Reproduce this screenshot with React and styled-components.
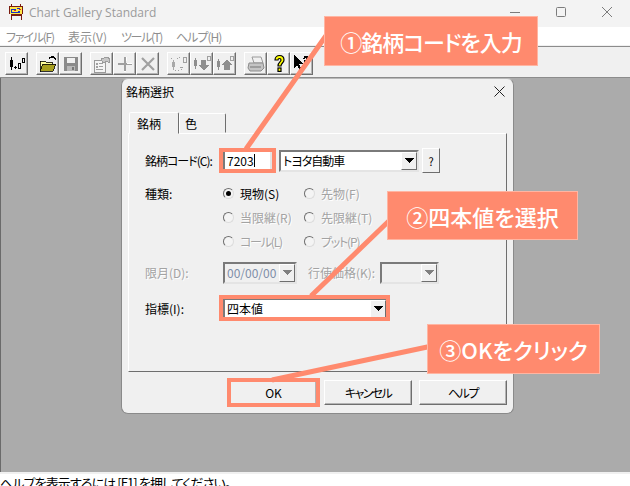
import styled, { createGlobalStyle } from "styled-components";

const JP = `"Noto Sans CJK JP", "Liberation Sans", sans-serif`;

const GlobalStyle = createGlobalStyle`
  html, body {
    margin: 0;
    padding: 0;
    background: #f0f0f0;
    overflow: hidden;
  }
  * {
    box-sizing: border-box;
  }
`;

const CandleIcon = () => (
  <svg width="18" height="18" viewBox="0 0 18 18" shapeRendering="crispEdges">
    <path d="M3 2h1v3h1v7H4v3H3v-3H2V5h1z" fill="#000" />
    <path d="M7 11h1v1h1v1H8v1H7v-1H6v-1h1zM10 8h3v6h-3zM11 9v4h1V9zM14 3h3v5h-3zM15 4v3h1V4z" fill="#000" fillRule="evenodd" />
  </svg>
);

const OpenIcon = () => (
  <svg width="18" height="18" viewBox="0 0 18 18" shapeRendering="crispEdges">
    <path d="M1 6h5l1 1h6v2H5l-3 7H1z" fill="#ffff9c" stroke="#000" strokeWidth="0.8" />
    <path d="M4 9h13l-3 7H1z" fill="#a8a020" stroke="#000" strokeWidth="0.8" />
    <path d="M10 4c1-2 3-3 5-2M15 2l2 3M15 2l-3 1" fill="none" stroke="#000" strokeWidth="1" />
  </svg>
);

const SaveIcon = () => (
  <svg width="18" height="18" viewBox="0 0 18 18" shapeRendering="crispEdges">
    <path d="M2 2h14v14H2z" fill="#8a8a8a" />
    <path d="M5 3h8v5H5z" fill="#f0f0f0" />
    <path d="M5 11h8v5H5z" fill="#b8b8b8" />
    <path d="M10 12h2v3h-2z" fill="#777" />
  </svg>
);

const FormIcon = () => (
  <svg width="20" height="18" viewBox="0 0 20 18" shapeRendering="crispEdges">
    <path d="M2 5h11v12H2z" fill="#f4f4f4" stroke="#9a9a9a" />
    <path d="M4 8h2v2H4zM7 8h4v1H7zM4 11h2v2H4zM7 11h4v1H7zM4 14h7v1H4z" fill="#a0a0a0" />
    <path d="M9 4l6-2 3 2-1 4-2-2-4 2z" fill="#c6c6c6" stroke="#9a9a9a" />
  </svg>
);

const PlusIcon = () => (
  <svg width="18" height="18" viewBox="0 0 18 18" shapeRendering="crispEdges">
    <path d="M8 2h2v6h6v2h-6v6H8v-6H2V8h6z" fill="#a0a0a0" />
    <path d="M10 2h1v6h5v1h-5M8 16h2v1H8z" fill="#fff" />
  </svg>
);

const CrossIcon = () => (
  <svg width="18" height="18" viewBox="0 0 18 18">
    <path d="M3 3l12 12M15 3L3 15" stroke="#a0a0a0" strokeWidth="2.2" fill="none" />
  </svg>
);

const CycleIcon = () => (
  <svg width="20" height="18" viewBox="0 0 20 18" shapeRendering="crispEdges">
    <path d="M3 7h1V5h1v2h1v5H5v3H4v-3H3z" fill="#a8a8a8" />
    <path d="M14 2h4v6h-4zM15 3v4h2V3z" fill="#a0a0a0" fillRule="evenodd" />
    <path d="M8 3h1v1H8zM10 2h1v1h-1zM2 3h1v1H2zM6 15h1v1H6zM9 15h1v1H9zM12 14h1v1h-1zM11 12h3v1h-3z" fill="#a0a0a0" />
  </svg>
);

const DownIcon = () => (
  <svg width="20" height="18" viewBox="0 0 20 18" shapeRendering="crispEdges">
    <path d="M2 5h1V3h1v2h1v6H4v3H3v-3H2z" fill="#8e8e8e" />
    <path d="M9 5h5v5h3l-5 6-5-6h2z" fill="#8e8e8e" />
    <path d="M15 1h4v5h-4zM16 2v3h2V2z" fill="#a0a0a0" fillRule="evenodd" />
  </svg>
);

const UpIcon = () => (
  <svg width="20" height="18" viewBox="0 0 20 18" shapeRendering="crispEdges">
    <path d="M2 6h1V4h1v2h1v6H4v3H3v-3H2z" fill="#8e8e8e" />
    <path d="M9 15v-5H7l5-6 5 6h-2v5z" fill="#8e8e8e" />
    <path d="M15 1h4v5h-4zM16 2v3h2V2z" fill="#a0a0a0" fillRule="evenodd" />
  </svg>
);

const PrintIcon = () => (
  <svg width="20" height="18" viewBox="0 0 20 18">
    <path d="M6 2h9l2 6H8z" fill="#f0f0f0" stroke="#9a9a9a" />
    <path d="M3 8h14l1 5-3 3H4l-2-3z" fill="#c4c4c4" stroke="#8c8c8c" />
    <path d="M4 12h11" stroke="#777" />
  </svg>
);

const HelpIcon = () => (
  <svg width="18" height="20" viewBox="0 0 18 20">
    <path d="M5 6c0-6 9-6 9 0 0 3-3 3-3 6H8c0-4 3-4 3-6 0-2-3-2-3 0z" fill="#ffff00" stroke="#000" strokeWidth="1.2" />
    <rect x="8" y="14" width="3" height="3.4" fill="#ffff00" stroke="#000" strokeWidth="1.2" />
  </svg>
);

const PointerHelpIcon = () => (
  <svg width="20" height="20" viewBox="0 0 20 20" shapeRendering="crispEdges">
    <path d="M2 1l9 9H7l3 6-2 1-3-6-3 3z" fill="#000" />
    <path d="M11 4h1V2h4v1h1v3h-1v1h-2v2h-2V6h2V4h-1v1h-2z" fill="#000" />
  </svg>
);

const AppIcon = () => (
  <svg width="16" height="16" viewBox="0 0 16 16" shapeRendering="crispEdges">
    <path d="M3 0h1v2h8V0h1v2h2v8h-1v6h-1v-4H4v4H3V10H1V2h2z" fill="#7a1c10" />
    <path d="M2 3h12v7H2z" fill="#ffe84a" />
    <path d="M3 5h5v1H4v2h6V7h2v2H3zM9 4h3v1H9z" fill="#1830c8" />
    <path d="M6 6h2v1H6zM11 5h2v1h-2z" fill="#e02020" />
  </svg>
);

const ArrowDown = ({ $disabled }) => (
  <svg width="9" height="5" viewBox="0 0 9 5" shapeRendering="crispEdges">
    <path d="M0 0h9L4.500 5z" fill={$disabled ? "#808080" : "#000"} />
  </svg>
);

const Page = styled.div`
  position: relative;
  width: 630px;
  height: 486px;
  display: flex;
  flex-direction: column;
  overflow: hidden;
  font-family: ${JP};
  font-size: 12px;
  font-feature-settings: "palt";
  color: #000;
`;

const TitleBar = styled.div`
  height: 27px;
  flex: none;
  display: flex;
  align-items: center;
  background: #f3f3f3;
  padding-left: 8px;
  padding-bottom: 3px;
`;

const TitleText = styled.span`
  margin-left: 5px;
  font-family: "Open Sans", "Liberation Sans", sans-serif;
  font-size: 12px;
  color: #9b9b9b;
`;

const WindowControls = styled.div`
  margin-left: auto;
  display: flex;
  align-items: center;
  color: #7c7c7c;
`;

const ControlSlot = styled.div`
  width: 46px;
  height: 24px;
  display: flex;
  align-items: center;
  justify-content: center;
`;

const MenuBar = styled.div`
  height: 19px;
  flex: none;
  display: flex;
  align-items: center;
  background: #fff;
  padding-left: 6px;
  border-bottom: 1px solid #f0f0f0;
`;

const MenuItem = styled.span`
  width: ${(p) => p.$width}px;
  font-size: 12px;
  color: #8f8f8f;
  white-space: nowrap;
  letter-spacing: ${(p) => p.$ls || 0}px;
`;

const Toolbar = styled.div`
  height: 32px;
  flex: none;
  display: flex;
  align-items: flex-start;
  padding: 5px 0 0 5px;
  gap: 8px;
  background: #f0f0f0;
  border-top: 1px solid #8c8c8c;
  border-bottom: 1px solid #8c8c8c;
`;

const ToolGroup = styled.div`
  display: flex;
`;

const ToolButton = styled.div`
  width: 23px;
  height: 23px;
  display: flex;
  align-items: center;
  justify-content: center;
  background: #f0f0f0;
  border: 1px solid;
  border-color: #fff #6e6e6e #6e6e6e #fff;
  box-shadow: inset -1px -1px 0 #b4b4b4;
`;

const Workspace = styled.div`
  flex: 1;
  display: flex;
  align-items: flex-start;
  padding-left: 120px;
  background: #ababab;
  border-left: 1px solid #6a6a6a;
`;

const StatusBar = styled.div`
  height: 14px;
  flex: none;
  background: #fff;
  border-top: 2px solid #f0f0f0;
  font-size: 13px;
  line-height: 17px;
  white-space: nowrap;
  overflow: hidden;
  letter-spacing: -0.9px;
`;

const Dialog = styled.div`
  width: 393px;
  height: 336px;
  display: flex;
  flex-direction: column;
  background: #f0f0f0;
  border: 1px solid #8a8a8a;
  border-top-color: #b8b8b8;
  border-radius: 7px;
  padding: 0 6px;
`;

const DialogHeader = styled.div`
  height: 24px;
  flex: none;
  display: flex;
  align-items: center;
  justify-content: space-between;
  padding-right: 2px;
  margin: 0 0 9px -2px;
  font-size: 12px;
`;

const Tabs = styled.div`
  height: 21px;
  flex: none;
  display: flex;
  align-items: flex-end;
  padding-left: 1px;
`;

const Tab = styled.div`
  width: ${(p) => p.$width}px;
  height: ${(p) => (p.$active ? 22 : 20)}px;
  padding-left: ${(p) => (p.$active ? 7 : 5)}px;
  display: flex;
  align-items: center;
  font-size: 12px;
  background: #f0f0f0;
  border: 1px solid;
  border-color: #fff #6e6e6e transparent #fff;
  border-radius: 2px 2px 0 0;
  position: relative;
  margin-bottom: ${(p) => (p.$active ? -1 : 0)}px;
  z-index: ${(p) => (p.$active ? 1 : 0)};
`;

const Panel = styled.div`
  height: 239px;
  flex: none;
  display: flex;
  flex-direction: column;
  padding: 15px 0 0 16px;
  border: 1px solid;
  border-color: #fff #6e6e6e #6e6e6e #fff;
`;

const Row = styled.div`
  display: flex;
  align-items: center;
  height: ${(p) => p.$h || 23}px;
  margin-top: ${(p) => p.$top || 0}px;
`;

const FieldLabel = styled.span`
  width: ${(p) => p.$width || 78}px;
  margin-left: ${(p) => p.$left || 0}px;
  flex: none;
  font-size: 12px;
  white-space: nowrap;
  letter-spacing: ${(p) => p.$ls || 0}px;
  color: ${(p) => (p.$disabled ? "#a3a3a3" : "#000")};
  text-shadow: ${(p) => (p.$disabled ? "1px 1px 0 #fff" : "none")};
`;

const TextField = styled.div`
  width: ${(p) => p.$width}px;
  height: 22px;
  flex: none;
  display: flex;
  align-items: center;
  padding-left: 2px;
  background: #fff;
  border: 2px solid;
  border-color: #7a7a7a #e4e4e4 #e4e4e4 #7a7a7a;
  font-size: 12px;
  white-space: nowrap;
`;

const Caret = styled.span`
  width: 1px;
  height: 13px;
  background: #000;
`;

const Combo = styled(TextField)`
  position: relative;
  padding-right: 17px;
  margin-left: ${(p) => p.$left || 0}px;
  letter-spacing: ${(p) => p.$ls || 0}px;
  background: ${(p) => (p.$disabled ? "#f0f0f0" : "#fff")};
  color: ${(p) => (p.$disabled ? "#7f8ea8" : "#000")};
`;

const ComboButton = styled.div`
  position: absolute;
  top: 0;
  right: 0;
  bottom: 0;
  width: 16px;
  display: flex;
  align-items: center;
  justify-content: center;
  background: #f0f0f0;
  border: 1px solid;
  border-color: #fff #6e6e6e #6e6e6e #fff;
`;

const SmallButton = styled.div`
  width: 18px;
  height: 25px;
  margin-left: 3px;
  flex: none;
  display: flex;
  align-items: center;
  justify-content: center;
  font-size: 11px;
  background: #f0f0f0;
  border: 1px solid;
  border-color: #fff #6e6e6e #6e6e6e #fff;
`;

const RadioGroup = styled.div`
  width: 81px;
  flex: none;
  display: flex;
  align-items: center;
  gap: 6px;
  font-size: 12px;
  white-space: nowrap;
  letter-spacing: ${(p) => p.$ls || 0}px;
  color: ${(p) => (p.$disabled ? "#a3a3a3" : "#000")};
  text-shadow: ${(p) => (p.$disabled ? "1px 1px 0 #fff" : "none")};
`;

const RadioDot = styled.span`
  width: 11px;
  height: 11px;
  flex: none;
  border-radius: 50%;
  background: #f4f4f4;
  border: 1px solid;
  border-color: #6e6e6e #dcdcdc #dcdcdc #6e6e6e;
  display: flex;
  align-items: center;
  justify-content: center;
  &::after {
    content: "";
    width: 5px;
    height: 5px;
    border-radius: 50%;
    background: ${(p) => (p.$checked ? "#000" : "transparent")};
  }
`;

const RadioIndent = styled.div`
  width: 78px;
  flex: none;
`;

const ButtonRow = styled.div`
  display: flex;
  justify-content: flex-end;
  gap: 7px;
  margin-top: 8px;
`;

const DialogButton = styled.div`
  width: ${(p) => p.$width}px;
  height: 25px;
  display: flex;
  align-items: center;
  justify-content: center;
  font-size: 12px;
  letter-spacing: ${(p) => p.$ls || 0}px;
  background: #f0f0f0;
  border: 1px solid;
  border-color: #fff #6e6e6e #6e6e6e #fff;
  box-shadow: inset -1px -1px 0 #b4b4b4;
`;

const Leaders = styled.svg`
  position: absolute;
  inset: 0;
  pointer-events: none;
`;

const Callout = styled.div`
  position: absolute;
  left: ${(p) => p.$x}px;
  top: ${(p) => p.$y}px;
  width: ${(p) => p.$w}px;
  height: ${(p) => p.$h}px;
  display: flex;
  align-items: center;
  justify-content: center;
  background: #ff8a6e;
  color: #fff;
  font-size: 22px;
  font-weight: 500;
  white-space: nowrap;
  letter-spacing: ${(p) => p.$ls || 0}px;
  outline: 1px solid #ffb5a2;
  outline-offset: -1px;
`;

const Highlight = styled.div`
  position: absolute;
  left: ${(p) => p.$x}px;
  top: ${(p) => p.$y}px;
  width: ${(p) => p.$w}px;
  height: ${(p) => p.$h}px;
  border: 4px solid #ff8a6e;
  pointer-events: none;
`;

const radioRows = [
  [
    { label: "現物(S)", checked: true },
    { label: "先物(F)", disabled: true },
  ],
  [
    { label: "当限継(R)", disabled: true },
    { label: "先限継(T)", disabled: true },
  ],
  [
    { label: "コール(L)", disabled: true, ls: -1.2 },
    { label: "プット(P)", disabled: true, ls: -1.2 },
  ],
];

const App = () => {
  return (
    <>
      <GlobalStyle />
      <Page>
        <TitleBar>
          <AppIcon />
          <TitleText>Chart Gallery Standard</TitleText>
          <WindowControls>
            <ControlSlot>
              <svg width="10" height="10" viewBox="0 0 10 10" shapeRendering="crispEdges">
                <path d="M0 5h10" stroke="currentColor" />
              </svg>
            </ControlSlot>
            <ControlSlot>
              <svg width="10" height="10" viewBox="0 0 10 10">
                <rect x="0.5" y="0.5" width="9" height="9" rx="1" fill="none" stroke="currentColor" />
              </svg>
            </ControlSlot>
            <ControlSlot>
              <svg width="10" height="10" viewBox="0 0 10 10">
                <path d="M0 0l10 10M10 0L0 10" stroke="currentColor" />
              </svg>
            </ControlSlot>
          </WindowControls>
        </TitleBar>
        <MenuBar>
          <MenuItem $width={62} $ls={-1.2}>ファイル(F)</MenuItem>
          <MenuItem $width={53}>表示(V)</MenuItem>
          <MenuItem $width={55} $ls={-1.4}>ツール(T)</MenuItem>
          <MenuItem $width={60} $ls={-1}>ヘルプ(H)</MenuItem>
        </MenuBar>
        <Toolbar>
          <ToolGroup>
            <ToolButton><CandleIcon /></ToolButton>
          </ToolGroup>
          <ToolGroup>
            <ToolButton><OpenIcon /></ToolButton>
            <ToolButton><SaveIcon /></ToolButton>
          </ToolGroup>
          <ToolGroup>
            <ToolButton><FormIcon /></ToolButton>
            <ToolButton><PlusIcon /></ToolButton>
            <ToolButton><CrossIcon /></ToolButton>
          </ToolGroup>
          <ToolGroup>
            <ToolButton><CycleIcon /></ToolButton>
            <ToolButton><DownIcon /></ToolButton>
            <ToolButton><UpIcon /></ToolButton>
          </ToolGroup>
          <ToolGroup>
            <ToolButton><PrintIcon /></ToolButton>
            <ToolButton><HelpIcon /></ToolButton>
            <ToolButton><PointerHelpIcon /></ToolButton>
          </ToolGroup>
        </Toolbar>
        <Workspace>
          <Dialog>
            <DialogHeader>
              <span>銘柄選択</span>
              <svg width="11" height="11" viewBox="0 0 11 11">
                <path d="M0.500 0.500l10 10M10.500 0.500l-10 10" stroke="#222" />
              </svg>
            </DialogHeader>
            <Tabs>
              <Tab $active $width={50}>銘柄</Tab>
              <Tab $width={47}>色</Tab>
            </Tabs>
            <Panel>
              <Row>
                <FieldLabel $ls={-1}>銘柄コード(C):</FieldLabel>
                <TextField $width={49}>7203<Caret /></TextField>
                <Combo $width={140} $left={7} $ls={-1}>
                  トヨタ自動車
                  <ComboButton><ArrowDown /></ComboButton>
                </Combo>
                <SmallButton>?</SmallButton>
              </Row>
              {radioRows.map((row, i) => (
                <Row key={i} $h={24} $top={i === 0 ? 9 : 0}>
                  {i === 0 ? <FieldLabel>種類:</FieldLabel> : <RadioIndent />}
                  {row.map((radio) => (
                    <RadioGroup key={radio.label} $disabled={radio.disabled} $ls={radio.ls}>
                      <RadioDot $checked={radio.checked} />
                      {radio.label}
                    </RadioGroup>
                  ))}
                </Row>
              ))}
              <Row $top={8}>
                <FieldLabel $disabled>限月(D):</FieldLabel>
                <Combo $width={74} $disabled>
                  00/00/00
                  <ComboButton><ArrowDown $disabled /></ComboButton>
                </Combo>
                <FieldLabel $disabled $width={72} $left={11}>行使価格(K):</FieldLabel>
                <Combo $width={59} $disabled>
                  <ComboButton><ArrowDown $disabled /></ComboButton>
                </Combo>
              </Row>
              <Row $top={13}>
                <FieldLabel>指標(I):</FieldLabel>
                <Combo $width={165}>
                  四本値
                  <ComboButton><ArrowDown /></ComboButton>
                </Combo>
              </Row>
            </Panel>
            <ButtonRow>
              <DialogButton $width={87}>OK</DialogButton>
              <DialogButton $width={88} $ls={-1.6}>キャンセル</DialogButton>
              <DialogButton $width={88} $ls={-1.4}>ヘルプ</DialogButton>
            </ButtonRow>
          </Dialog>
        </Workspace>
        <StatusBar>ヘルプを表示するには [F1] を押してください。</StatusBar>

        <Leaders width="630" height="486" viewBox="0 0 630 486">
          <path d="M246 149L330 30M311 296L392 218M272 380L432 346" stroke="#ff8a6e" strokeWidth="5" fill="none" />
        </Leaders>
        <Highlight $x={219} $y={148} $w={57} $h={25} />
        <Highlight $x={219} $y={295} $w={171} $h={26} />
        <Highlight $x={227} $y={378} $w={93} $h={29} />
        <Callout $x={324} $y={16} $w={214} $h={50} $ls={-1}>①銘柄コードを入力</Callout>
        <Callout $x={387} $y={191} $w={191} $h={49}>②四本値を選択</Callout>
        <Callout $x={427} $y={324} $w={173} $h={50}>③OKをクリック</Callout>
      </Page>
    </>
  );
};

export default App;
